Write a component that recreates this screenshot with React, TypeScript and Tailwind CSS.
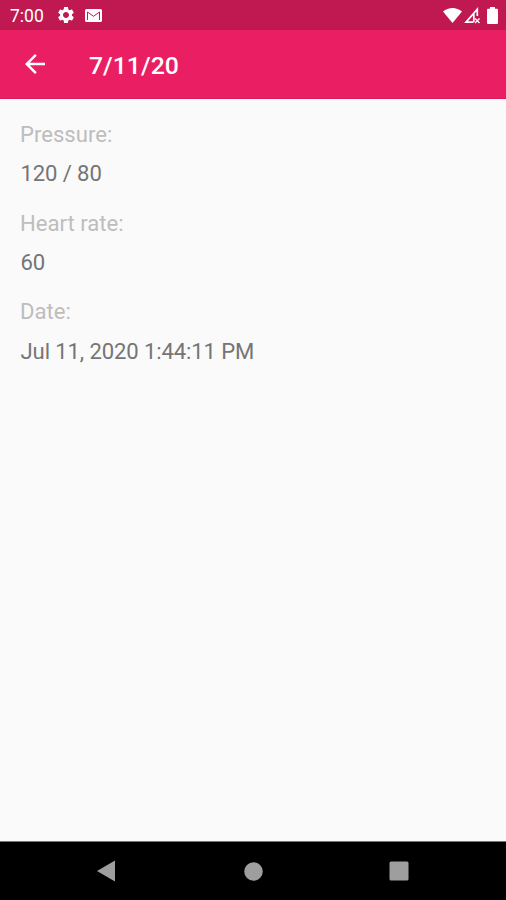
/** Measurement detail screen: pressure, heart rate and date of one record */
import { MdArrowBack, MdSettings } from "react-icons/md";

interface Field {
  label: string;
  value: string;
}

const fields: Field[] = [
  { label: "Pressure:", value: "120 / 80" },
  { label: "Heart rate:", value: "60" },
  { label: "Date:", value: "Jul 11, 2020 1:44:11 PM" },
];

export default function App() {
  return (
    <div className="flex h-[900px] w-[506px] flex-col overflow-hidden bg-[#fafafa] font-['Roboto',sans-serif]">
      <StatusBar />
      <header className="flex h-[69px] flex-shrink-0 items-center border-b border-[#d81b5c] bg-[#e91e63] pl-5 text-white">
        <button type="button" aria-label="Back" className="flex-shrink-0">
          <MdArrowBack className="h-[30px] w-[30px]" />
        </button>
        <h1 className="ml-[39px] pt-1 text-[24.8px] leading-none font-medium">7/11/20</h1>
      </header>

      <main className="flex-1 px-5 pt-[15px]">
        {fields.map((field) => (
          <FieldRow key={field.label} field={field} />
        ))}
      </main>

      <NavBar />
    </div>
  );
}

function FieldRow({ field }: { field: Field }) {
  return (
    <div className="h-[88.7px] text-[22.1px]">
      <div className="h-[39.2px] leading-[40px] text-[#bdbdbd]">{field.label}</div>
      <div className="pl-[0.5px] leading-[40px] tracking-[-0.12px] text-[#757575]">
        {field.value}
      </div>
    </div>
  );
}

function StatusBar() {
  return (
    <div className="flex h-[30px] flex-shrink-0 items-center bg-[#c01850] pr-2 pl-[10px] text-white">
      <span className="w-[46px] pt-[3px] text-[17.5px] leading-none">7:00</span>
      <MdSettings className="h-5 w-5" />
      <svg className="ml-[9px] h-[13px] w-[17px]" viewBox="0 0 17 13">
        <rect width="17" height="13" rx="1.5" fill="currentColor" />
        <path d="M2.500 11V3l6 4.300L14.500 3v8" fill="none" stroke="#c01850" strokeWidth="1" />
      </svg>

      <div className="ml-auto flex items-center">
        <svg className="h-[15px] w-[19px]" viewBox="0 0 19 15">
          <path d="M0 3.600C5.500-1.100 13.500-1.100 19 3.600L9.500 15z" fill="currentColor" />
        </svg>
        <svg className="ml-0.5 h-[17px] w-[16px]" viewBox="0 0 16 17">
          <path
            d="M13.300 9V2.200L2 15.200H9.500M9.800 7v8"
            fill="none"
            stroke="currentColor"
            strokeWidth="1.700"
          />
          <path
            d="M11 11.500l4.500 4.500m0-4.500l-4.500 4.500"
            fill="none"
            stroke="currentColor"
            strokeWidth="1.300"
          />
        </svg>
        <svg className="ml-[7px] h-[17px] w-[11px]" viewBox="0 0 11 17">
          <path
            d="M3 0h5v1.700h2a1 1 0 0 1 1 1V16a1 1 0 0 1-1 1H1a1 1 0 0 1-1-1V2.700a1 1 0 0 1 1-1h2z"
            fill="currentColor"
          />
        </svg>
      </div>
    </div>
  );
}

function NavBar() {
  return (
    <nav className="flex h-[59px] flex-shrink-0 items-center justify-between border-t border-[#757575] bg-black pr-[97px] pl-[97px] text-[#9e9e9e]">
      <svg className="h-[22px] w-[18px]" viewBox="0 0 18 22">
        <path d="M18 .5v21L0 11z" fill="currentColor" />
      </svg>
      <svg className="ml-[3px] h-[19px] w-[19px]" viewBox="0 0 19 19">
        <circle cx="9.500" cy="9.500" r="9.300" fill="currentColor" />
      </svg>
      <svg className="h-[20px] w-[20px]" viewBox="0 0 20 20">
        <rect x=".5" y=".5" width="19" height="19" rx="1.500" fill="currentColor" />
      </svg>
    </nav>
  );
}
